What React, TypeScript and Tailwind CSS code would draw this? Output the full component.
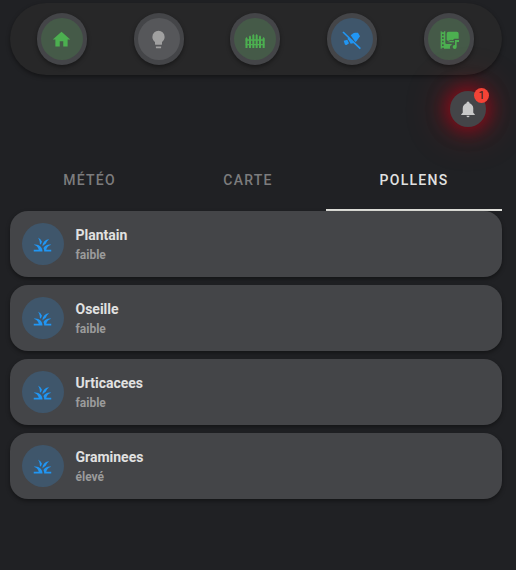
import type { ReactNode } from 'react';
import clsx from 'clsx';

const HOME = 'M10,20V14H14V20H19V12H22L12,3L2,12H5V20H10Z';
const BULB =
  'M12,2A7,7 0 0,0 5,9C5,11.38 6.19,13.47 8,14.74V17A1,1 0 0,0 9,18H15A1,1 0 0,0 16,17V14.74C17.81,13.47 19,11.38 19,9A7,7 0 0,0 12,2M9,21A1,1 0 0,0 10,22H14A1,1 0 0,0 15,21V20H9V21Z';
const BELL =
  'M21,19V20H3V19L5,17V11C5,7.9 7.03,5.17 10,4.29C10,4.19 10,4.1 10,4A2,2 0 0,1 12,2A2,2 0 0,1 14,4C14,4.1 14,4.19 14,4.29C16.97,5.17 19,7.9 19,11V17L21,19M14,21A2,2 0 0,1 12,23A2,2 0 0,1 10,21';
const GRASS =
  'M12 20H2v-2h5.75A8.03 8.03 0 0 0 2 12.26c.64-.16 1.31-.26 2-.26 4.42 0 8 3.58 8 8zm10-7.74c-.64-.16-1.31-.26-2-.26-2.93 0-5.48 1.58-6.88 3.93a9.82 9.82 0 0 1 .87 4.07h8v-2h-5.75A8.061 8.061 0 0 1 22 12.26zm-6.36-1.24a10.03 10.03 0 0 1 4.09-5C15.44 6.16 12 9.67 12 14v.02c.95-1.27 2.2-2.3 3.64-3zm-4.22-2.17A8.527 8.527 0 0 0 6.7 4C8.14 5.86 9 8.18 9 10.71c0 .21-.03.41-.04.61.43.24.83.52 1.22.82a10.57 10.57 0 0 1 1.24-3.29z';

function Icon({ d, className = 'size-[21px]' }: { d: string; className?: string }) {
  return (
    <svg viewBox="0 0 24 24" fill="currentColor" className={className}>
      <path d={d} />
    </svg>
  );
}

function FenceIcon() {
  return (
    <svg viewBox="0 0 63 63" fill="currentColor" className="size-[21px]">
      <path d="M4.5 28l3-4 3 4v29h-6zM15 23l3-4 3 4v34h-6zM25 19l3-4 3 4v38h-6zM35 19l3-4 3 4v38h-6zM45 23l3-4 3 4v34h-6zM56 28l3-4 3 4v29h-6z" />
      <path d="M5 31h56v4H5zM5 45h56v4H5z" />
    </svg>
  );
}

function CameraOffIcon() {
  return (
    <svg viewBox="0 0 63 63" fill="currentColor" className="size-[21px]">
      <path d="M29 19l8-6q2-2 5-2h9l6 11-8 11q-2 4-6 6z" />
      <path d="M21 25l19 17-11 2-5-9-4-5zM8 35l11-3 5 11-7 5-5-1z" />
      <path d="M6 9l52 50" fill="none" stroke="currentColor" strokeWidth="5" />
    </svg>
  );
}

function MultimediaIcon() {
  return (
    <svg viewBox="0 0 63 63" fill="currentColor" className="size-[21px]">
      {/* film strip */}
      <path
        fillRule="evenodd"
        d="M8 7h3v3h7V7h4v34q0 4 4 4h15v3q-8 3-4 11H18v-3h-7v3H8zM12 15v5h5v-5zM12 25v5h5v-5zM12 35v5h5v-5zM12 46v5h5v-5z"
      />
      {/* picture */}
      <path d="M32 8h24q6 0 6 6v15H49l-5 5-5-2-9 4-4-3V14q0-6 6-6z" />
      <path d="M27 40l12-5 6 2 3-2v5H29z" />
      {/* note */}
      <path d="M51 33h12v6h-7v15a6 6 0 1 1-5-6z" />
    </svg>
  );
}

type NavItem = { name: string; tone: string; icon: ReactNode };

const nav: NavItem[] = [
  { name: 'home', tone: 'bg-[#455a48] text-[#4caf50]', icon: <Icon d={HOME} /> },
  { name: 'lights', tone: 'bg-[#56575a] text-[#a0a0a0]', icon: <Icon d={BULB} /> },
  { name: 'gate', tone: 'bg-[#455a48] text-[#4caf50]', icon: <FenceIcon /> },
  { name: 'cameras', tone: 'bg-[#3f566b] text-[#2196f3]', icon: <CameraOffIcon /> },
  { name: 'media', tone: 'bg-[#455a48] text-[#4caf50]', icon: <MultimediaIcon /> },
];

const pollens = [
  { name: 'Plantain', level: 'faible' },
  { name: 'Oseille', level: 'faible' },
  { name: 'Urticacees', level: 'faible' },
  { name: 'Graminees', level: 'élevé' },
];

function PollenCard({ name, level }: { name: string; level: string }) {
  return (
    <div className="flex h-[66px] items-center gap-[11.5px] rounded-[18px] bg-[#444548] px-3 shadow-[0_2px_4px_rgba(0,0,0,0.4)]">
      <div className="flex size-[42px] items-center justify-center rounded-full bg-[#3f566b] pr-px text-[#2196f3]">
        <Icon d={GRASS} />
      </div>
      <div className="font-bold">
        <div className="text-[14px] leading-5 text-[#e1e1e1]">{name}</div>
        <div className="mt-0.5 text-[12px] leading-4 text-[#9b9b9b]">{level}</div>
      </div>
    </div>
  );
}

export default function App() {
  return (
    <div className="h-[570px] w-[516px] overflow-hidden bg-[#202124] pt-[3px] pr-[14px] pl-[10px] font-['Roboto',sans-serif]">
      {/* Navigation */}
      <nav className="grid h-[72px] grid-cols-5 items-center justify-items-center rounded-[36px] bg-[#272728] pr-[5px] pl-1 shadow-[0_2px_4px_rgba(0,0,0,0.4)]">
        {nav.map((item) => (
          <div
            key={item.name}
            className="flex h-[52px] w-[50px] items-center justify-center rounded-[26px] bg-[#444548] shadow-[0_2px_4px_rgba(0,0,0,0.4)]"
          >
            <div className={clsx('flex size-[42px] items-center justify-center rounded-full pr-px', item.tone)}>
              {item.icon}
            </div>
          </div>
        ))}
      </nav>

      {/* Notifications */}
      <div className="flex h-[76px] justify-end pt-4 pr-4">
        <div className="relative flex size-9 items-center justify-center rounded-full bg-[#444548] pr-px pb-px text-[#c8c8c8] shadow-[0_0_18px_4px_rgba(190,0,20,0.6),0_0_38px_8px_rgba(190,0,20,0.28)]">
          <Icon d={BELL} className="size-[18px]" />
          <span className="absolute -top-[3px] -right-[3px] flex size-[15px] items-center justify-center rounded-full bg-[#f44336] text-[11px] leading-none text-[#212121]">
            1
          </span>
        </div>
      </div>

      {/* Tabs */}
      <div className="grid h-[60px] grid-cols-[158px_158px_176px] text-center text-[14px] leading-[58px] font-medium tracking-[1.25px] text-[#7c7c7d]">
        <div className="pl-px">MÉTÉO</div>
        <div className="pl-0.5">CARTE</div>
        <div className="border-b-2 border-[#e1e1dc] text-[#e1e1e1]">POLLENS</div>
      </div>

      <div className="flex flex-col gap-2">
        {pollens.map((pollen) => (
          <PollenCard key={pollen.name} {...pollen} />
        ))}
      </div>
    </div>
  );
}
